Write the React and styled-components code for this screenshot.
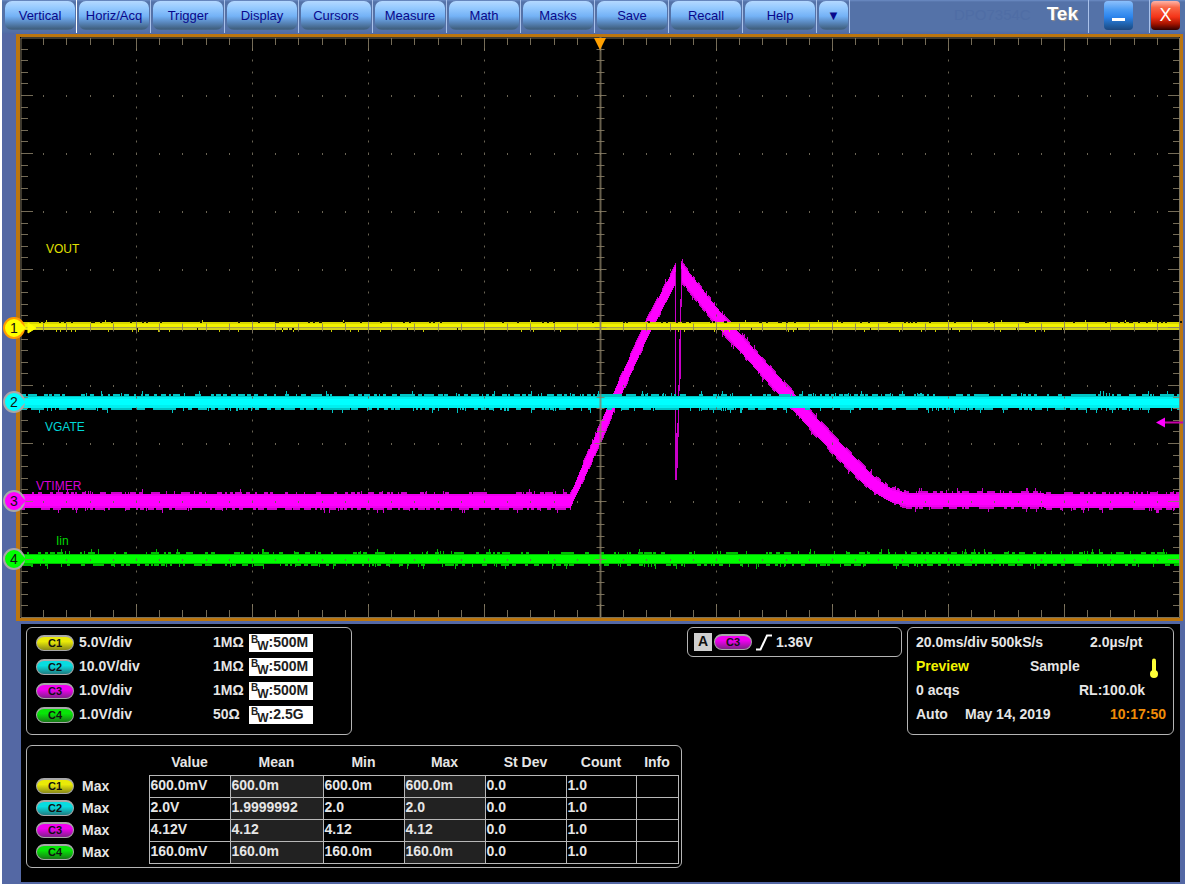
import React from 'react';
import styled, { createGlobalStyle } from 'styled-components';

const GlobalStyle = createGlobalStyle`
  * { box-sizing: border-box; }
  body {
    margin: 0;
    background: #ffffff;
    font-family: "Liberation Sans", Arial, sans-serif;
  }
`;

const CHANNEL_COLORS = {
  C1: ['#eaea08', '#8a8a18'],
  C2: ['#08dce0', '#1f7c80'],
  C3: ['#f000f0', '#802088'],
  C4: ['#08e408', '#187818'],
};

/* ---------- shell ---------- */

const Shell = styled.div`
  display: flex;
  flex-direction: column;
  min-height: 100vh;
  margin-left: 2px;
  background: #5468a4;
`;

const TopBar = styled.header`
  display: flex;
  height: 34px;
  background: linear-gradient(#6c8cc4 0, #5472a8 2px, #5472a8 31px, #5068a4 34px);
`;

const Menu = styled.nav`
  display: flex;
  flex: 1;
  padding-left: 1px;
`;

const MenuSlot = styled.div`
  flex: 0 0 ${(p) => (p.$small ? '33px' : '74px')};
  height: 33px;
  padding: 1px 1px 3px 2px;
  border-right: 1px solid ${(p) => (p.$bright ? '#ffffff' : '#a9c1ea')};
`;

const MenuButton = styled.button`
  display: block;
  width: 100%;
  height: 29px;
  padding: 0;
  border: 0;
  border-radius: 7px;
  background: linear-gradient(#b4d8ff 0, #9accff 20%, #74b2f6 52%, #5c8cc4 72%, #40607f 96%, #4a6a90 100%);
  color: #08088c;
  font: 13px/28px "Liberation Sans", Arial, sans-serif;
  text-align: center;
`;

const Model = styled.span`
  margin-right: 16px;
  color: #4f6da5;
  font-size: 15px;
  line-height: 29px;
`;

const Brand = styled.span`
  margin-right: 10px;
  color: #ffffff;
  font-size: 19px;
  font-weight: bold;
  line-height: 27px;
  text-shadow: 1px 1px 1px #9a8f88;
`;

const WindowSlot = styled.div`
  height: 33px;
  padding: 1px ${(p) => p.$right}px 0 ${(p) => p.$left}px;
  border-left: 1px solid #a9c1ea;
`;

const WindowButton = styled.button`
  display: flex;
  align-items: center;
  justify-content: center;
  width: 29px;
  height: 29px;
  padding: 0;
  border: 0;
  border-radius: 4px;
  color: #ffffff;
  font: 18px/29px "Liberation Sans", Arial, sans-serif;
  background: ${(p) =>
    p.$close
      ? 'linear-gradient(#ffb4a8 0, #f86848 22%, #f43418 55%, #a81400 78%, #300000 100%)'
      : 'linear-gradient(#8cc0fc 0, #4c9cf4 30%, #2c84ec 55%, #2060a8 82%, #1c4880 100%)'};
`;

const Scope = styled.section`
  margin: 0 2px 0 14px;
  border: solid #bb750e;
  border-width: 3px 3px 3px 4px;
  background: #000000;
`;

const Screen = styled.svg`
  display: block;
  width: 100%;
  height: auto;
  overflow: visible;
`;

const Readouts = styled.main`
  display: flex;
  flex: 1;
  flex-direction: column;
  align-items: flex-start;
  gap: 10px;
  margin: 3px 5px 2px 19px;
  padding: 3px 6px 14px 5px;
  background: #000000;
  color: #e6e6e6;
  font-size: 14px;
  font-weight: bold;
`;

const TopRow = styled.div`
  display: flex;
  align-items: flex-start;
  gap: 5px;
  width: 100%;
`;

const Panel = styled.section`
  border: 1px solid #b4b4b4;
  border-radius: 6px;
`;

const ChannelPanel = styled(Panel)`
  width: 326px;
  margin-right: auto;
  padding: 3px 9px 7px;
`;

const ChannelRow = styled.div`
  display: grid;
  grid-template-columns: 43px 134px 36px 64px;
  align-items: center;
  height: 24px;
  line-height: 18px;
`;

const Reading = styled.span`
  padding-bottom: 2px;
`;

const Pill = styled.span`
  display: block;
  width: 38px;
  height: 16px;
  border: solid #a8a8a8;
  border-width: 2px 1px 1px;
  border-radius: 8px;
  background: linear-gradient(${(p) => p.$from} 0, ${(p) => p.$from} 35%, ${(p) => p.$to} 100%);
  color: #101010;
  font-size: 11px;
  font-weight: bold;
  line-height: 13px;
  text-align: center;
`;

const Bandwidth = styled.span`
  display: flex;
  height: 18px;
  padding-left: 2px;
  background: #ffffff;
  color: #202020;
  line-height: 16px;
`;

const BandB = styled.span`
  font-size: 10px;
  line-height: 11px;
`;

const BandW = styled.span`
  align-self: flex-end;
  margin-left: -1px;
  font-size: 12px;
  line-height: 12px;
`;

const TriggerPanel = styled(Panel)`
  display: flex;
  align-items: center;
  width: 215px;
  height: 30px;
  padding: 0 6px;
`;

const TriggerSource = styled.span`
  width: 18px;
  height: 18px;
  margin-right: 2px;
  background: #cfcfcf;
  color: #101010;
  line-height: 16px;
  text-align: center;
`;

const SlopeIcon = styled.svg`
  width: 18px;
  height: 18px;
  margin: 0 3px 0 3px;
`;

const TimePanel = styled(Panel)`
  width: 267px;
  padding: 2px 8px 8px;
`;

const TimeRow = styled.div`
  display: grid;
  grid-template-columns: ${(p) => p.$columns};
  align-items: center;
  height: 24px;
  white-space: nowrap;
`;

const Tint = styled.span`
  color: ${(p) => p.$color};
`;

const Thermometer = styled.svg`
  justify-self: end;
  width: 8px;
  height: 20px;
  margin: 4px 7px 0 0;
`;

const MeasurePanel = styled(Panel)`
  padding: 0 2px 3px 0;
`;

const Table = styled.table`
  border-collapse: collapse;
  table-layout: fixed;
  width: 651px;
`;

const Col = styled.col`
  width: ${(p) => p.$width}px;
`;

const HeadCell = styled.th`
  height: 29px;
  padding: 3px 0 0;
  text-align: center;
`;

const NameCell = styled.th`
  height: 22px;
  padding: 0 0 1px 9px;
  text-align: left;
`;

const NameContent = styled.span`
  display: flex;
  align-items: center;
  gap: 8px;
`;

const ValueCell = styled.td`
  height: 22px;
  padding: 0 0 2px 1px;
  border: 1px solid #b8b8b8;
  background: ${(p) => (p.$shaded ? '#222222' : 'transparent')};
  line-height: 18px;
`;

/* ---------- waveform drawing ---------- */

const W = 1160;
const H = 581;

function randomSource(seed) {
  let a = seed;
  return () => {
    a = (a + 0x6d2b79f5) | 0;
    let t = Math.imul(a ^ (a >>> 15), 1 | a);
    t = (t + Math.imul(t ^ (t >>> 7), 61 | t)) ^ t;
    return ((t ^ (t >>> 14)) >>> 0) / 4294967296;
  };
}

// One filled column per pixel; raised stretches last one to four pixels.
function raggedBand(seed, from, to, topAt, bottomAt, spread, dense) {
  const rnd = randomSource(seed);
  let d = '';
  let up = 0;
  let down = 0;
  let upLeft = 0;
  let downLeft = 0;
  for (let x = from; x < to; x += 1) {
    if (upLeft <= 0) {
      up = rnd() < dense ? spread : 0;
      upLeft = 1 + Math.floor(rnd() * 4);
    }
    if (downLeft <= 0) {
      down = rnd() < dense ? spread : 0;
      downLeft = 1 + Math.floor(rnd() * 4);
    }
    upLeft -= 1;
    downLeft -= 1;
    const spikeUp = spread && rnd() < 0.04 ? 3 : 0;
    const spikeDown = spread && rnd() < 0.04 ? 3 : 0;
    const top = Math.round(topAt(x)) - up - spikeUp;
    const bottom = Math.round(bottomAt(x)) + down + spikeDown;
    d += `M${x} ${top}h1V${bottom}h-1z`;
  }
  return d;
}

const flat = (v) => () => v;

function interpolate(points) {
  return (x) => {
    for (let i = 1; i < points.length; i += 1) {
      if (x <= points[i][0]) {
        const [x0, y0] = points[i - 1];
        const [x1, y1] = points[i];
        return y0 + ((y1 - y0) * (x - x0)) / (x1 - x0);
      }
    }
    return points[points.length - 1][1];
  };
}

const TIMER_RISE = interpolate([[0, 464], [550, 464], [580, 396], [595, 361], [627, 291], [656, 236]]);
const TIMER_FALL = interpolate([
  [661, 235], [700, 284], [737, 325], [767, 358], [797, 391], [820, 415],
  [840, 435], [853, 447], [870, 458], [887, 463], [W, 464],
]);
const TIMER_EXTRA = interpolate([[0, 0], [551, 0], [565, 2], [600, 3], [700, 2], [840, 2], [870, 0], [W, 0]]);

function timerBand(seed, half, spread, dense) {
  const part = (s, from, to, centre) =>
    raggedBand(
      s,
      from,
      to,
      (x) => centre(x) - half - TIMER_EXTRA(x),
      (x) => centre(x) + half + TIMER_EXTRA(x),
      spread,
      dense,
    );
  return part(seed, 0, 656, TIMER_RISE) + part(seed + 1, 661, W, TIMER_FALL);
}

const Timer = () => (
  <g>
    <path d={timerBand(31, 7, 2, 0.45)} fill="#cc00cc" />
    <path d={timerBand(35, 7, 0, 0)} fill="#f000f0" />
    <path d={timerBand(35, 5, 0, 0)} fill="#ff00ff" />
    <path
      d="M655 235h1v208h-1zM656 396h1v47h-1zM657 386h1v45h-1zM658 348h1v52h-1zM659 302h1v52h-1zM660 262h1v80h-1zM661 232h1v38h-1z"
      fill="#c800c8"
    />
  </g>
);

const Lin = () => (
  <g>
    <path d={raggedBand(41, 0, W, flat(517), flat(527), 2, 0.35)} fill="#00bc00" />
    <path d={raggedBand(43, 0, W, flat(518), flat(526), 0, 0)} fill="#00ff00" />
  </g>
);

const Gate = () => (
  <g>
    <path d={raggedBand(21, 0, W, flat(359), flat(371), 2, 0.5)} fill="#00c4c4" />
    <path d={raggedBand(23, 0, W, flat(360), flat(371), 0, 0)} fill="#00f0f0" />
    <rect x="0" y="362" width={W} height="6" fill="#00ffff" />
  </g>
);

function yellowGaps() {
  const rnd = randomSource(17);
  let d = '';
  for (let x = 8; x < W; x += 1) {
    if (rnd() < 0.08) d += `M${x} 284h${1 + Math.round(rnd() * 3)}v2h-2z`;
    if (rnd() < 0.01) d += `M${x} 291h1v2h-1z`;
  }
  return d;
}

function yellowSpikes() {
  const rnd = randomSource(19);
  let d = '';
  for (let x = 8; x < W; x += 1) {
    if (rnd() < 0.015) d += `M${x} 283h1v2h-1z`;
    if (rnd() < 0.03) d += `M${x} 293h1v2h-1z`;
  }
  return d;
}

const Out = () => (
  <g>
    <rect x="0" y="285" width={W} height="5" fill="#f2f200" />
    <rect x="0" y="285" width={W} height="2" fill="#d8d800" />
    <rect x="0" y="290" width={W} height="3" fill="#d4d41c" />
    <path d={yellowGaps()} fill="#181800" />
    <path d={yellowSpikes()} fill="#c8c800" />
  </g>
);

function graticule() {
  let ticks = '';
  let dots = '';
  for (let i = 1; i < 50; i += 1) {
    const x = Math.round(i * 23.2) + 0.5;
    const major = i % 5 === 0;
    const len = major ? 13 : 7;
    const mid = major ? 6 : 4;
    ticks += `M${x} 1v${len}M${x} 580v-${len}M${x} ${290.5 - mid}v${mid * 2}`;
    for (let row = 1; row < 10; row += 1) {
      if (row !== 5) dots += `M${x} ${row * 58}v2`;
    }
  }
  for (let j = 1; j < 50; j += 1) {
    const y = Math.round(j * 11.6) + 0.5;
    const major = j % 5 === 0;
    const len = major ? 12 : 7;
    const mid = major ? 6 : 4;
    ticks += `M1 ${y}h${len}M1160 ${y}h-${len}M${580.5 - mid} ${y}h${mid * 2}`;
    for (let col = 1; col < 10; col += 1) {
      if (col !== 5) dots += `M${col * 116 + 0.5} ${y - 1}v2`;
    }
  }
  return { ticks, dots };
}

const Graticule = () => {
  const { ticks, dots } = graticule();
  return (
    <g fill="none" stroke="#8a7f66">
      <path d={dots} stroke="#6a6454" />
      <path d={ticks} strokeOpacity="0.85" />
      <path d="M0 290.5H1160" strokeOpacity="0.6" />
      <path d="M580.5 0V580" strokeWidth="2" strokeOpacity="0.75" />
      <path d="M1 1H1159.5V580.5H1z" strokeOpacity="0.9" />
    </g>
  );
};

const MARKERS = [
  { n: 1, y: 291, fill: '#ffff00', ring: '#ff9c00' },
  { n: 2, y: 365, fill: '#00ffff', ring: '#a8a8a8' },
  { n: 3, y: 464, fill: '#ff00ff', ring: '#a8a8a8' },
  { n: 4, y: 522, fill: '#00ff00', ring: '#a8a8a8' },
];

const LABELS = [
  { text: 'VOUT', x: 26, y: 216, color: '#e0e000' },
  { text: 'VGATE', x: 25, y: 394, color: '#00d8d8' },
  { text: 'VTIMER', x: 16, y: 453, color: '#d800d8' },
  { text: 'Iin', x: 36, y: 508, color: '#00d800' },
];

const TraceLabel = styled.text`
  font-size: 12px;
`;

const MarkerText = styled.text`
  font-size: 14px;
  fill: #101010;
  text-anchor: middle;
`;

const Waveforms = () => (
  <Screen viewBox={`0 0 ${W} ${H}`} role="img" aria-label="Waveforms">
    <rect width={W} height={H} fill="#000000" />
    {LABELS.map((l) => (
      <TraceLabel key={l.text} x={l.x} y={l.y} fill={l.color}>{l.text}</TraceLabel>
    ))}
    <g shapeRendering="crispEdges">
      <Timer />
      <Lin />
      <Gate />
      <Out />
    </g>
    <Graticule />
    <path d="M574 1h12l-6 12z" fill="#ffa000" />
    <path d="M1145 385.5H1163" stroke="#c800a8" strokeWidth="2" />
    <path d="M1136 385.5l9 -5v10z" fill="#ff00ff" />
    <path d="M4 291H10M8 286l8 5l-8 5z" fill="#ffff00" stroke="#ffff00" />
    {MARKERS.map((m) => (
      <g key={m.n}>
        <circle cx="-6" cy={m.y} r="10" fill={m.fill} stroke={m.ring} strokeWidth="2" />
        <path d={`M2 ${m.y - 4}l4 4l-4 4z`} fill={m.fill} />
        <MarkerText x="-6" y={m.y + 5}>{m.n}</MarkerText>
      </g>
    ))}
  </Screen>
);

/* ---------- readouts ---------- */

const ChannelPill = ({ name }) => (
  <Pill $from={CHANNEL_COLORS[name][0]} $to={CHANNEL_COLORS[name][1]}>{name}</Pill>
);

const MENU = ['Vertical', 'Horiz/Acq', 'Trigger', 'Display', 'Cursors', 'Measure', 'Math', 'Masks', 'Save', 'Recall', 'Help'];

const CHANNELS = [
  ['C1', '5.0V/div', '1MΩ', ':500M'],
  ['C2', '10.0V/div', '1MΩ', ':500M'],
  ['C3', '1.0V/div', '1MΩ', ':500M'],
  ['C4', '1.0V/div', '50Ω', ':2.5G'],
];

const COLUMNS = ['', 'Value', 'Mean', 'Min', 'Max', 'St Dev', 'Count', 'Info'];
const COLUMN_WIDTHS = [122, 81, 93, 81, 81, 81, 70, 42];

const MEASUREMENTS = [
  ['C1', '600.0mV', '600.0m', '600.0m', '600.0m', '0.0', '1.0', ''],
  ['C2', '2.0V', '1.9999992', '2.0', '2.0', '0.0', '1.0', ''],
  ['C3', '4.12V', '4.12', '4.12', '4.12', '0.0', '1.0', ''],
  ['C4', '160.0mV', '160.0m', '160.0m', '160.0m', '0.0', '1.0', ''],
];

export default function App() {
  return (
    <>
      <GlobalStyle />
      <Shell>
        <TopBar>
          <Menu>
            {MENU.map((item, i) => (
              <MenuSlot key={item} $bright={i === 0}>
                <MenuButton type="button">{item}</MenuButton>
              </MenuSlot>
            ))}
            <MenuSlot $small>
              <MenuButton type="button" aria-label="More menus">▼</MenuButton>
            </MenuSlot>
          </Menu>
          <Model>DPO7354C</Model>
          <Brand>Tek</Brand>
          <WindowSlot $left={15} $right={16}>
            <WindowButton type="button" aria-label="Minimize">
              <svg width="29" height="29" viewBox="0 0 29 29"><path d="M8 18.5h13" stroke="#fff" strokeWidth="3" /></svg>
            </WindowButton>
          </WindowSlot>
          <WindowSlot $left={1} $right={5}>
            <WindowButton type="button" aria-label="Close" $close>X</WindowButton>
          </WindowSlot>
        </TopBar>

        <Scope>
          <Waveforms />
        </Scope>

        <Readouts>
          <TopRow>
            <ChannelPanel>
              {CHANNELS.map(([name, scale, impedance, bandwidth]) => (
                <ChannelRow key={name}>
                  <ChannelPill name={name} />
                  <Reading>{scale}</Reading>
                  <Reading>{impedance}</Reading>
                  <Bandwidth>
                    <BandB>B</BandB>
                    <BandW>W</BandW>
                    <span>{bandwidth}</span>
                  </Bandwidth>
                </ChannelRow>
              ))}
            </ChannelPanel>

            <TriggerPanel>
              <TriggerSource>A</TriggerSource>
              <ChannelPill name="C3" />
              <SlopeIcon viewBox="0 0 18 18">
                <path d="M1 16.500H5.500L12 2.500H17" fill="none" stroke="#fff" strokeWidth="2" />
              </SlopeIcon>
              <span>1.36V</span>
            </TriggerPanel>

            <TimePanel>
              <TimeRow $columns="75px 99px auto">
                <span>20.0ms/div</span>
                <span>500kS/s</span>
                <span>2.0µs/pt</span>
              </TimeRow>
              <TimeRow $columns="114px auto 1fr">
                <Tint $color="#f4f400">Preview</Tint>
                <span>Sample</span>
                <Thermometer viewBox="0 0 8 20">
                  <path d="M4 2.500V15" stroke="#ffff38" strokeWidth="4" strokeLinecap="round" />
                  <circle cx="4" cy="16" r="4" fill="#ffff38" />
                </Thermometer>
              </TimeRow>
              <TimeRow $columns="163px auto">
                <span>0 acqs</span>
                <span>RL:100.0k</span>
              </TimeRow>
              <TimeRow $columns="49px 145px auto">
                <span>Auto</span>
                <span>May 14, 2019</span>
                <Tint $color="#f08c08">10:17:50</Tint>
              </TimeRow>
            </TimePanel>
          </TopRow>

          <MeasurePanel>
            <Table>
              <colgroup>
                {COLUMN_WIDTHS.map((w, i) => (
                  <Col key={i} $width={w} />
                ))}
              </colgroup>
              <thead>
                <tr>
                  {COLUMNS.map((c) => (
                    <HeadCell key={c} scope="col">{c}</HeadCell>
                  ))}
                </tr>
              </thead>
              <tbody>
                {MEASUREMENTS.map(([name, ...values]) => (
                  <tr key={name}>
                    <NameCell scope="row">
                      <NameContent>
                        <ChannelPill name={name} />
                        <span>Max</span>
                      </NameContent>
                    </NameCell>
                    {values.map((v, i) => (
                      <ValueCell key={i} $shaded={i === 1 || i === 3}>{v}</ValueCell>
                    ))}
                  </tr>
                ))}
              </tbody>
            </Table>
          </MeasurePanel>
        </Readouts>
      </Shell>
    </>
  );
}
